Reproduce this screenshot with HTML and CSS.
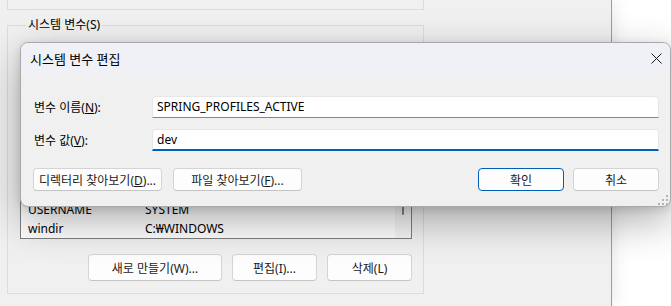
FILE: index.html
```html
<!DOCTYPE html>
<html lang="ko">
<head>
<meta charset="utf-8">
<title>시스템 변수 편집</title>
<link rel="stylesheet" href="styles.css">
</head>
<body>
<div class="screen">
  <div class="parent">
    <div class="prev-group"></div>
    <fieldset class="group">
      <legend class="group-label">시스템 변수(S)</legend>
      <div class="list">
        <div class="list-rows">
          <div class="row"><span class="col-name">USERNAME</span><span>SYSTEM</span></div>
          <div class="row"><span class="col-name">windir</span><span>C:₩WINDOWS</span></div>
        </div>
        <div class="scrollbar"><div class="thumb"></div></div>
      </div>
      <div class="group-buttons">
        <button class="btn btn-wide">새로 만들기(W)...</button>
        <button class="btn">편집(I)...</button>
        <button class="btn">삭제(L)</button>
      </div>
    </fieldset>
  </div>

  <div class="dialog">
    <div class="titlebar">
      <span class="title">시스템 변수 편집</span>
      <svg class="close" width="11" height="11" viewBox="0 0 11 11"><path d="M0.5 0.5 L10.5 10.5 M10.5 0.5 L0.5 10.5" stroke="#1a1a1a" stroke-width="1" fill="none"/></svg>
    </div>
    <div class="dialog-body">
      <div class="field">
        <label class="field-label">변수 이름(<u>N</u>):</label>
        <div class="input">SPRING_PROFILES_ACTIVE</div>
      </div>
      <div class="field field-value">
        <label class="field-label">변수 값(<u>V</u>):</label>
        <div class="input input-focus">dev</div>
      </div>
      <div class="dialog-buttons">
        <button class="btn dbtn dbtn-wide">디렉터리 찾아보기(<u>D</u>)...</button>
        <button class="btn dbtn dbtn-wide">파일 찾아보기(<u>F</u>)...</button>
        <span class="spacer"></span>
        <button class="btn dbtn btn-default">확인</button>
        <button class="btn dbtn">취소</button>
      </div>
    </div>
    <svg class="grip" width="10" height="10" viewBox="0 0 10 10">
      <rect x="8" y="0" width="2" height="2" fill="#b4b4b4"/>
      <rect x="4" y="4" width="2" height="2" fill="#b4b4b4"/>
      <rect x="8" y="4" width="2" height="2" fill="#b4b4b4"/>
      <rect x="0" y="8" width="2" height="2" fill="#b4b4b4"/>
      <rect x="4" y="8" width="2" height="2" fill="#b4b4b4"/>
      <rect x="8" y="8" width="2" height="2" fill="#b4b4b4"/>
    </svg>
  </div>
</div>
</body>
</html>
```
FILE: styles.css
```css
html, body {
  margin: 0;
  padding: 0;
}
body {
  background: #ffffff;
  font-family: "Noto Sans", "Noto Sans CJK KR", sans-serif;
  font-size: 12px;
  color: #000;
  width: 671px;
  height: 306px;
  overflow: hidden;
}
.screen {
  position: relative;
  width: 671px;
  height: 306px;
  display: flex;
}
.parent {
  width: 612px;
  height: 306px;
  box-sizing: border-box;
  background: #f0f0f0;
  border-right: 1px solid #9c9c9c;
  box-shadow: 0 0 18px rgba(0, 0, 0, 0.12);
  display: flex;
  flex-direction: column;
}
.prev-group {
  margin-left: 7px;
  width: 417px;
  height: 10px;
  box-sizing: border-box;
  border: 1px solid #dcdcdc;
  border-top: none;
}
.group {
  margin: 7px 0 0 7px;
  padding: 0 11px 12px 12px;
  width: 417px;
  box-sizing: border-box;
  border: 1px solid #dcdcdc;
  min-inline-size: 0;
}
.group-label {
  padding: 0 2px;
  margin-left: 6px;
  line-height: 16px;
}
.list {
  margin-top: 24px;
  height: 182px;
  box-sizing: border-box;
  border: 1px solid #7f7f7f;
  background: #ffffff;
  display: flex;
  overflow: hidden;
}
.list-rows {
  flex: 1;
  display: flex;
  flex-direction: column;
  justify-content: flex-end;
  overflow: hidden;
  padding-left: 7px;
}
.row {
  height: 19px;
  line-height: 19px;
  display: flex;
  white-space: nowrap;
}
.col-name {
  width: 117px;
  flex: none;
}
.scrollbar {
  width: 16px;
  background: #f6f6f6;
  display: flex;
  flex-direction: column;
  align-items: center;
  justify-content: flex-end;
  padding-bottom: 23px;
  box-sizing: border-box;
}
.thumb {
  width: 2px;
  height: 60px;
  background: #868686;
  border-radius: 1px;
}
.group-buttons {
  display: flex;
  justify-content: flex-end;
  gap: 10px;
  margin-top: 15px;
}
.btn {
  font: inherit;
  color: #1b1b1b;
  height: 27px;
  width: 85px;
  box-sizing: border-box;
  padding: 0;
  background: #fdfdfd;
  border: 1px solid #d4d4d4;
  border-bottom-color: #c4c4c4;
  border-radius: 4px;
  text-align: center;
}
.btn-wide {
  width: 134px;
}
.dialog {
  position: absolute;
  left: 20px;
  top: 42px;
  width: 651px;
  height: 165px;
  box-sizing: border-box;
  border: 1px solid #a9a9a9;
  border-radius: 8px;
  background: #f0f0f0;
  overflow: hidden;
  box-shadow: 0 14px 40px rgba(0, 0, 0, 0.32), 0 2px 8px rgba(0, 0, 0, 0.12);
  display: flex;
  flex-direction: column;
}
.titlebar {
  height: 30px;
  flex: none;
  background: #eff1f7;
  display: flex;
  align-items: center;
  padding: 0 8px 0 9px;
}
.title {
  flex: 1;
  font-size: 13px;
}
.dialog-body {
  flex: 1;
  padding: 23px 11px 0 13px;
  display: flex;
  flex-direction: column;
}
.field {
  display: flex;
  align-items: center;
  height: 22px;
}
.field-value {
  margin-top: 11px;
}
.field-label {
  width: 118px;
  flex: none;
}
.input {
  flex: 1;
  height: 22px;
  box-sizing: border-box;
  background: #ffffff;
  border: 1px solid #e6e6e6;
  border-bottom-color: #878787;
  border-radius: 4px 4px 0 0;
  padding-left: 4px;
  line-height: 20px;
  white-space: nowrap;
}
.input-focus {
  border-bottom: 2px solid #005fb8;
  line-height: 19px;
}
.dialog-buttons {
  display: flex;
  margin-top: 17px;
  margin-left: -1px;
  gap: 11px;
}
.dbtn {
  height: 23px;
  width: 86px;
}
.dbtn-wide {
  width: 129px;
}
.spacer {
  flex: 1;
}
.btn-default {
  border: 1px solid #005fb8;
  margin-right: -2px;
}
.grip {
  position: absolute;
  right: 2px;
  bottom: 1px;
}
```
